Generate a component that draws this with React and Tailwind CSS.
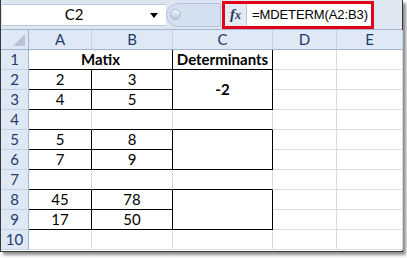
const cols = ['A', 'B', 'C', 'D', 'E'];

// one data cell: r = right border black, b = bottom border black
const Cell = ({ children, r, b, bold, span, rows }) => (
    <div
        className={`flex items-center justify-center border-r border-b ${r ? 'border-r-black' : 'border-r-[#d9dbde]'} ${b ? 'border-b-black' : 'border-b-[#d9dbde]'} ${bold ? 'font-bold' : ''} ${span ? 'col-span-2' : ''} ${rows ? 'row-span-2' : ''}`}
    >
        {children}
    </div>
);

const RowHead = ({ n }) => (
    <div className="flex items-center justify-center bg-[#dfe8f5] border-r border-r-[#9eb6ce] border-b border-b-[#c5d2e3] text-[#1d3c6e]">
        {n}
    </div>
);

export default function App() {
    return (
        <div className="w-[407px] h-[258px] bg-white overflow-hidden" style={{ fontFamily: 'Lato, "Liberation Sans", sans-serif' }}>
            <div className="w-[403px] h-[252px] border-l border-r border-b border-[#3a3a3a] shadow-[3px_3px_3px_rgba(0,0,0,0.45)] flex flex-col bg-white">
                {/* Formula bar */}
                <div className="h-[30px] bg-[#dde6f1] border-b border-[#9eb6ce] flex items-center">
                    <div className="shrink-0 ml-[1px] w-[164px] h-[22px] bg-white border-y border-[#b9c8dc] flex items-center relative">
                        <span className="flex-1 text-center text-[15px] text-black pr-[20px]">C2</span>
                        <span className="absolute left-[148px] top-[8px] w-0 h-0 border-l-[4px] border-r-[4px] border-t-[5px] border-l-transparent border-r-transparent border-t-black" />
                    </div>
                    <div className="shrink-0 w-[55px] h-[24px] rounded-l-full bg-[#d3e0ef] border border-[#b4c4d8] flex items-center pl-[3px]">
                        <div className="w-[11px] h-[11px] rounded-full bg-gradient-to-b from-[#f4f7fb] to-[#b8c6d8] border border-[#a9b8cc]" />
                    </div>
                    <div className="shrink-0 ml-[1px] w-[152px] h-[28px] border-[3px] border-[#e3001b] flex overflow-hidden">
                        <div className="w-[22px] shrink-0 bg-[#e3eaf4] border-r border-[#b8c6d8] flex items-center justify-center">
                            <span className="italic font-bold text-[#2e3a58] text-[15px] leading-none" style={{ fontFamily: '"Liberation Serif", serif' }}>f<span className="text-[12px]">x</span></span>
                        </div>
                        <div className="flex-1 bg-white flex items-center pl-[5px] text-[13px] tracking-[-0.1px] text-black whitespace-nowrap" style={{ fontFamily: '"Liberation Sans", sans-serif' }}>=MDETERM(A2:B3)</div>
                    </div>
                    <div className="flex-1" />
                </div>

                {/* Sheet */}
                <div className="grid grid-cols-[28px_63px_81px_100px_64px_66px] auto-rows-[20px] text-[15px] text-black">
                    <div className="bg-[#dfe8f5] border-r border-b border-[#9eb6ce] relative">
                        <svg className="absolute right-[3px] bottom-[3px]" width="12" height="12" viewBox="0 0 12 12"><polygon points="12,0 12,12 0,12" fill="#b7c4d6" /></svg>
                    </div>
                    {cols.map(c => (
                        <div key={c} className="flex items-center justify-center bg-[#dfe8f5] border-r border-r-[#c5d2e3] border-b border-b-[#9eb6ce] text-[#1d3c6e]">
                            {c}
                        </div>
                    ))}

                    {/* row 1 */}
                    <RowHead n="1" />
                    <Cell span r b bold>Matix</Cell>
                    <Cell r b bold>Determinants</Cell>
                    <Cell />
                    <Cell />

                    {/* rows 2-3 */}
                    <RowHead n="2" />
                    <Cell r b>2</Cell>
                    <Cell r b>3</Cell>
                    <Cell rows r b bold>-2</Cell>
                    <Cell />
                    <Cell />
                    <RowHead n="3" />
                    <Cell r b>4</Cell>
                    <Cell r b>5</Cell>
                    <Cell />
                    <Cell />

                    {/* row 4 */}
                    <RowHead n="4" />
                    <Cell b />
                    <Cell b />
                    <Cell b />
                    <Cell />
                    <Cell />

                    {/* rows 5-6 */}
                    <RowHead n="5" />
                    <Cell r b>5</Cell>
                    <Cell r b>8</Cell>
                    <Cell rows r b />
                    <Cell />
                    <Cell />
                    <RowHead n="6" />
                    <Cell r b>7</Cell>
                    <Cell r b>9</Cell>
                    <Cell />
                    <Cell />

                    {/* row 7 */}
                    <RowHead n="7" />
                    <Cell b />
                    <Cell b />
                    <Cell b />
                    <Cell />
                    <Cell />

                    {/* rows 8-9 */}
                    <RowHead n="8" />
                    <Cell r b>45</Cell>
                    <Cell r b>78</Cell>
                    <Cell rows r b />
                    <Cell />
                    <Cell />
                    <RowHead n="9" />
                    <Cell r b>17</Cell>
                    <Cell r b>50</Cell>
                    <Cell />
                    <Cell />

                    {/* row 10 */}
                    <RowHead n="10" />
                    <Cell />
                    <Cell />
                    <Cell />
                    <Cell />
                    <Cell />
                </div>
            </div>
        </div>
    );
}
